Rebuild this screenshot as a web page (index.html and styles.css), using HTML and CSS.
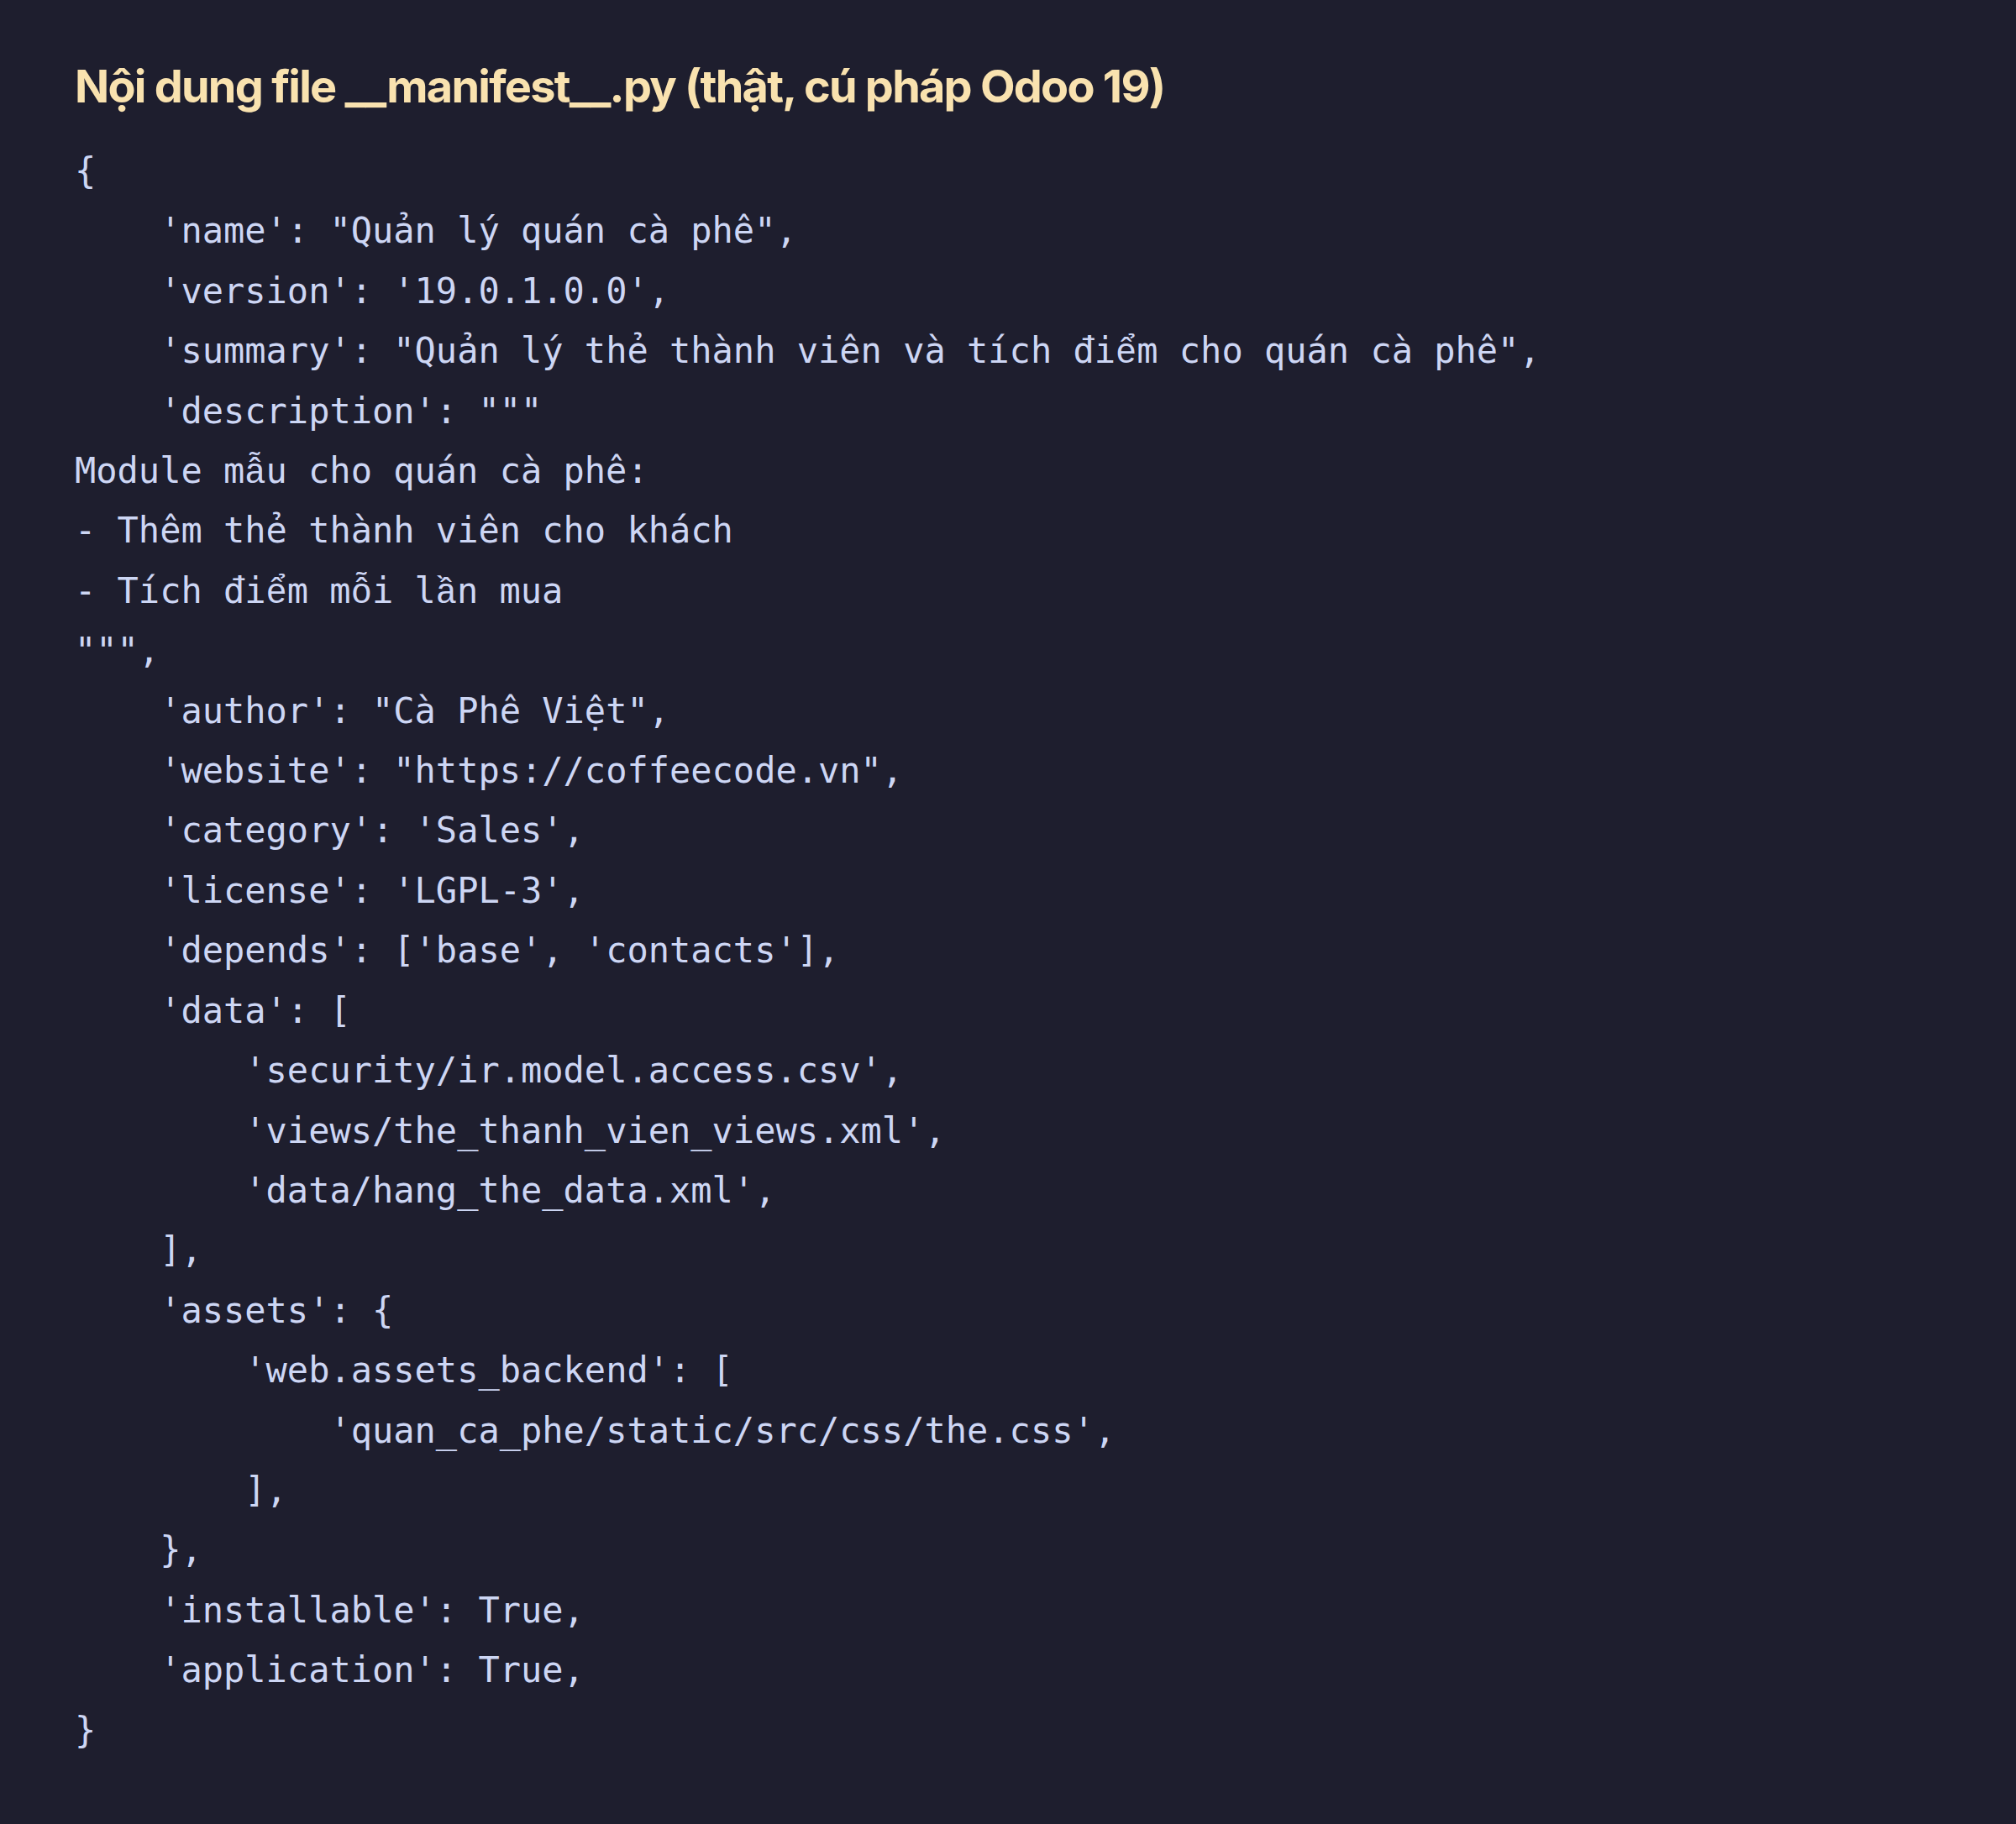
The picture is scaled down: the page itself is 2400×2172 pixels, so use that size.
FILE: index.html
```html
<!DOCTYPE html>
<html lang="vi">
<head>
<meta charset="utf-8">
<title>__manifest__.py</title>
<link rel="stylesheet" href="styles.css">
</head>
<body>
<main class="page">
<h2 class="title">Nội dung file __manifest__.py (thật, cú pháp Odoo 19)</h2>
<pre class="code">{
    'name': "Quản lý quán cà phê",
    'version': '19.0.1.0.0',
    'summary': "Quản lý thẻ thành viên và tích đi<span class="vi">ể</span>m cho quán cà phê",
    'description': """
Module m<span class="vi">ẫ</span>u cho quán cà phê:
- Thêm thẻ thành viên cho khách
- Tích đi<span class="vi">ể</span>m m<span class="vi">ỗ</span>i l<span class="vi">ầ</span>n mua
""",
    'author': "Cà Phê Việt",
    'website': "https://coffeecode.vn",
    'category': 'Sales',
    'license': 'LGPL-3',
    'depends': ['base', 'contacts'],
    'data': [
        'security/ir.model.access.csv',
        'views/the_thanh_vien_views.xml',
        'data/hang_the_data.xml',
    ],
    'assets': {
        'web.assets_backend': [
            'quan_ca_phe/static/src/css/the.css',
        ],
    },
    'installable': True,
    'application': True,
}</pre>
</main>
</body>
</html>
```

FILE: styles.css
```css
html, body {
  margin: 0;
  padding: 0;
  background: #1e1e2e;
}

.page {
  min-height: 2172px;
  box-sizing: border-box;
  padding: 70px 89px 0;
}

.title {
  margin: 0;
  font-family: Inter, "Liberation Sans", sans-serif;
  font-weight: 700;
  font-size: 54px;
  line-height: normal;
  letter-spacing: -1.75px;
  color: #f9e2af;
}

.code {
  margin: 33px 0 0;
  font-family: "DejaVu Sans Mono", "Liberation Mono", monospace;
  font-size: 42px;
  line-height: 71.4px;
  color: #cdd6f4;
  white-space: pre;
}

.vi {
  font-family: "Liberation Mono", "DejaVu Sans Mono", monospace;
  line-height: 0;
}
```
